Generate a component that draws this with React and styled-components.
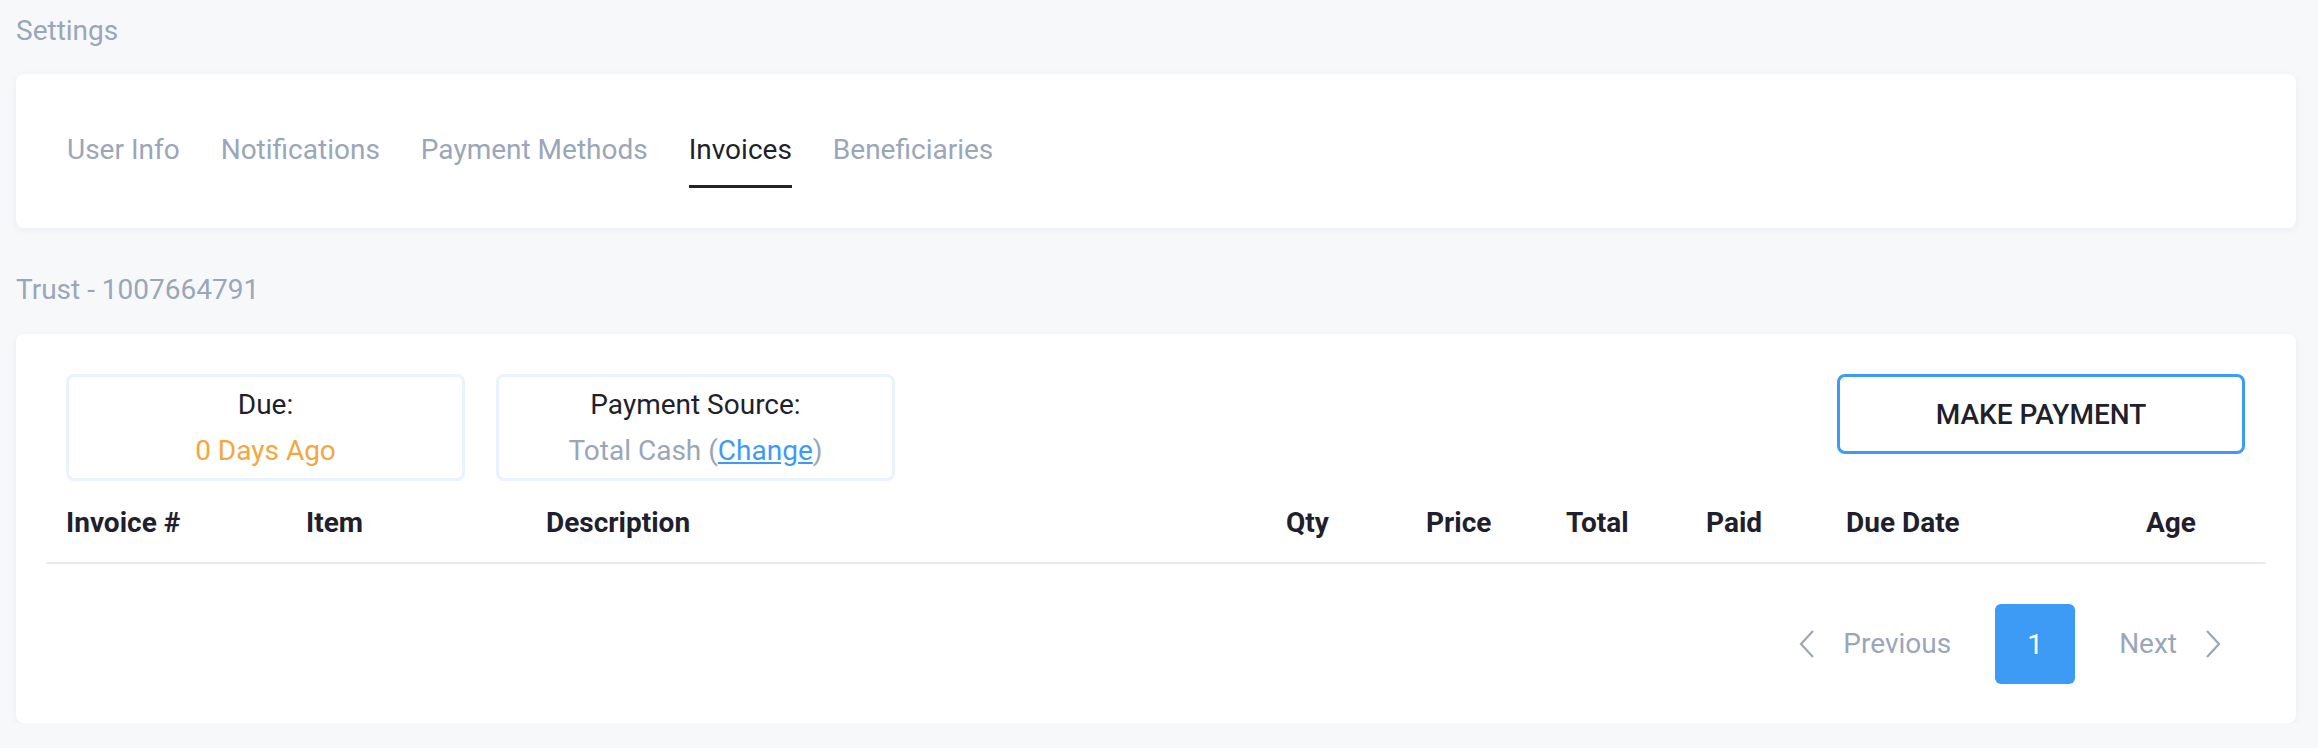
import React from "react";
import styled, { createGlobalStyle } from "styled-components";

const GlobalStyle = createGlobalStyle`
  body {
    margin: 0;
    background-color: #f7f8fa;
    font-family: Roboto, "Liberation Sans", sans-serif;
  }
`;

const Page = styled.div`
  padding: 15px 22px 0 16px;
`;

const PageTitle = styled.div`
  color: #9aa6b9;
  font-size: 28px;
  line-height: 32px;
`;

const Card = styled.section`
  background-color: #fff;
  border-radius: 8px;
  box-shadow: 0 2px 8px rgba(30, 40, 70, 0.05);
`;

const TabsCard = styled(Card)`
  display: flex;
  gap: 41px;
  margin-top: 27px;
  padding: 40px 51px;
`;

const Tab = styled.div`
  padding: 20px 0 19px;
  font-size: 28px;
  line-height: 32px;
  color: ${(props) => (props.active ? "#1f1f2d" : "#9aa6b9")};
  border-bottom: 3px solid
    ${(props) => (props.active ? "#23232f" : "transparent")};
  cursor: pointer;
`;

const SectionTitle = styled(PageTitle)`
  margin: 46px 0 28px;
`;

const InvoiceCard = styled(Card)`
  padding: 40px 30px 39px;
`;

const TopRow = styled.div`
  display: flex;
  justify-content: space-between;
  align-items: flex-start;
  padding: 0 21px 0 20px;
`;

const InfoGroup = styled.div`
  display: flex;
  gap: 31px;
`;

const InfoBox = styled.div`
  display: flex;
  flex-direction: column;
  gap: 14px;
  width: 399px;
  box-sizing: border-box;
  padding: 12px 0 11px;
  border: 3px solid #e9f2fd;
  border-radius: 8px;
  text-align: center;
  font-size: 28px;
  line-height: 32px;
`;

const InfoLabel = styled.div`
  color: #1f1f2d;
`;

const InfoValue = styled.div`
  color: ${(props) => props.color || "#9aa6b9"};
`;

const ChangeLink = styled.a`
  color: #3d9bf6;
  text-decoration: underline;
  cursor: pointer;
`;

const PayButton = styled.button`
  width: 408px;
  height: 80px;
  box-sizing: border-box;
  border: 3px solid #3d9bf6;
  border-radius: 8px;
  background-color: #fff;
  color: #1f1f2d;
  font-family: Roboto, "Liberation Sans", sans-serif;
  font-size: 28px;
  font-weight: 500;
  cursor: pointer;
`;

const HeaderRow = styled.div`
  display: grid;
  grid-template-columns: 240px 240px 1fr 140px 140px 140px 140px 300px 140px;
  margin-top: 26px;
  padding-bottom: 23px;
  border-bottom: 2px solid #e9e9ef;
`;

const HeaderCell = styled.div`
  padding-left: 20px;
  font-size: 28px;
  line-height: 32px;
  font-weight: 700;
  color: #1f1f2d;
`;

const Pagination = styled.div`
  display: flex;
  justify-content: flex-end;
  align-items: center;
  gap: 44px;
  margin-top: 40px;
  padding-right: 45px;
`;

const PageLink = styled.div`
  display: flex;
  align-items: center;
  gap: 28px;
  font-size: 28px;
  line-height: 32px;
  color: #9aa6b9;
  cursor: pointer;
`;

const PageNumber = styled.div`
  display: flex;
  align-items: center;
  justify-content: center;
  width: 80px;
  height: 80px;
  border-radius: 6px;
  background-color: #3d9af5;
  color: #fff;
  font-size: 28px;
`;

const Chevron = ({ dir }) => (
  <svg width="16" height="28" viewBox="0 0 16 28" fill="none">
    <path
      d={dir === "left" ? "M14 1 L2 14 L14 27" : "M2 1 L14 14 L2 27"}
      stroke="#9aa6b9"
      strokeWidth="2.2"
    />
  </svg>
);

const tabs = [
  "User Info",
  "Notifications",
  "Payment Methods",
  "Invoices",
  "Beneficiaries",
];

const columns = [
  "Invoice #",
  "Item",
  "Description",
  "Qty",
  "Price",
  "Total",
  "Paid",
  "Due Date",
  "Age",
];

const App = () => {
  const [activeTab, setActiveTab] = React.useState("Invoices");

  return (
    <Page>
      <GlobalStyle />
      <PageTitle>Settings</PageTitle>
      <TabsCard>
        {tabs.map((t) => (
          <Tab key={t} active={t === activeTab} onClick={() => setActiveTab(t)}>
            {t}
          </Tab>
        ))}
      </TabsCard>

      <SectionTitle>Trust - 1007664791</SectionTitle>
      <InvoiceCard>
        <TopRow>
          <InfoGroup>
            <InfoBox>
              <InfoLabel>Due:</InfoLabel>
              <InfoValue color="#f4a640">0 Days Ago</InfoValue>
            </InfoBox>
            <InfoBox>
              <InfoLabel>Payment Source:</InfoLabel>
              <InfoValue>
                Total Cash (<ChangeLink>Change</ChangeLink>)
              </InfoValue>
            </InfoBox>
          </InfoGroup>
          <PayButton>MAKE PAYMENT</PayButton>
        </TopRow>

        <HeaderRow>
          {columns.map((c) => (
            <HeaderCell key={c}>{c}</HeaderCell>
          ))}
        </HeaderRow>

        <Pagination>
          <PageLink>
            <Chevron dir="left" />
            Previous
          </PageLink>
          <PageNumber>1</PageNumber>
          <PageLink>
            Next
            <Chevron dir="right" />
          </PageLink>
        </Pagination>
      </InvoiceCard>
    </Page>
  );
};

export default App;
